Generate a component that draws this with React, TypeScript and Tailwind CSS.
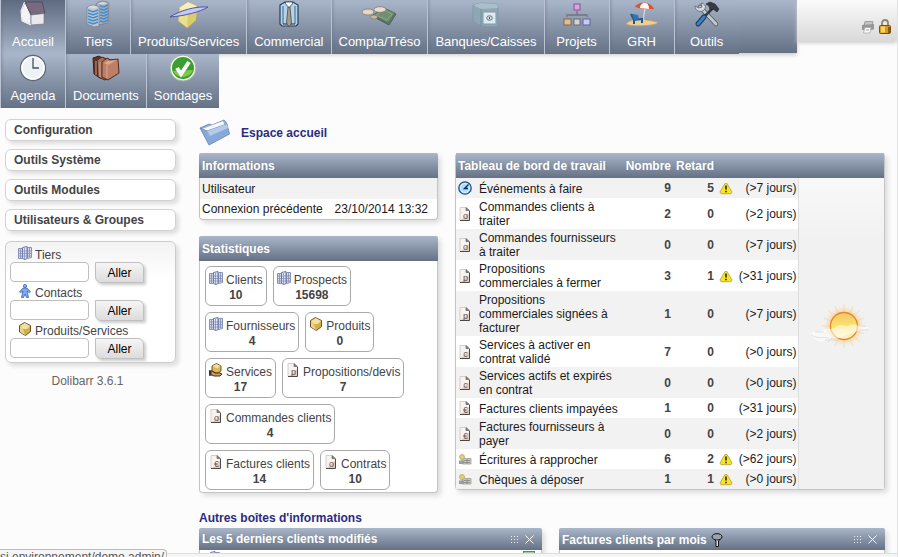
import type { ReactNode } from 'react';

const bar = 'bg-linear-to-b from-[#aab6ca] to-[#657185]';
const panel = 'rounded-sm border border-t-0 border-[#c4c4c4] bg-white shadow-[3px_3px_5px_#ddd]';
const barTitle = 'text-xs font-bold text-white [text-shadow:1px_1px_1px_#7d8899]';

/* ---------- main menu icons ---------- */

function HouseIcon() {
  return (
    <svg viewBox="0 0 26 26" className="size-[26px]" aria-hidden="true">
      <path d="M1 11 5 2l6 13v10l-9-4z" fill="#f4f4f6" stroke="#777b85" strokeWidth=".7" />
      <path d="m5 2 17 0 3 11-14 2z" fill="#796a80" stroke="#4c4658" strokeWidth=".8" />
      <path d="m11 15 13-1.500V24l-13 1z" fill="#e9e9ed" stroke="#777b85" strokeWidth=".7" />
      <path d="M4.500 2 1 11l1 10 9 4" fill="none" stroke="#fff" strokeWidth="1" />
    </svg>
  );
}

function TowersIcon() {
  return (
    <svg viewBox="0 0 26 28" className="h-7 w-[26px]" aria-hidden="true">
      <path d="M11 4c2-3 9-4 13-1l-1 20-10 2z" fill="#a9adb4" stroke="#6d747f" strokeWidth=".6" />
      <path d="M2 8c1-3 8-4 12-1v19l-5 1-7-3z" fill="#c3c6cb" stroke="#6d747f" strokeWidth=".6" />
      <path d="M3 10l5 2 5-2M3 13l5 2 5-2M3 16l5 2 5-2M3 19l5 2 5-2M3 22l5 2 5-2M15 6l4 1 4-2M15 9l4 1 4-2M15 12l4 1 4-2M15 15l4 1 4-2M15 18l4 1 4-2M15 21l4 1 4-2" fill="none" stroke="#3f8ed2" strokeWidth="1.500" />
      <path d="M3 7q5-3 10 0-5 3-10 0M13 3.500q5-3 9 0-4 2-9 0" fill="#d9dadc" />
    </svg>
  );
}

function BoxIcon() {
  return (
    <svg viewBox="0 0 40 28" className="h-7 w-10" aria-hidden="true">
      <path d="m10 8 9-6 9 4-1 14-9 8-9-7z" fill="#ecdf8d" stroke="#a79c5c" strokeWidth=".7" />
      <path d="m10 8 9 5 9-7-9-4z" fill="#f7f0bb" />
      <path d="m19 13 9-7-1 14-9 8z" fill="#dccb6c" />
      <path d="M1 17C10 11 26 6 39 7c-8 5-24 9-38 10z" fill="#c6caf0" stroke="#4c55a8" strokeWidth="1" />
    </svg>
  );
}

function ShirtIcon() {
  return (
    <svg viewBox="0 0 20 28" className="h-7 w-5" aria-hidden="true">
      <path d="m1 5 5-3h8l5 3v19l-2 2H3l-2-2z" fill="#b5d3ea" stroke="#273f59" strokeWidth="1.200" />
      <path d="M4 6v18M16 6v18" stroke="#5a80a3" strokeWidth="1.300" />
      <path d="m6 3 4 5 4-5-1-1H7z" fill="#fff" stroke="#34495e" strokeWidth=".8" />
      <path d="M9 7h2l1.500 16-2.500 4-2.500-4z" fill="#a39c92" stroke="#4f4a46" strokeWidth=".8" />
      <path d="M4 24h4M12 24h4" stroke="#1d2d3d" strokeWidth="1.200" />
    </svg>
  );
}

function MoneyIcon() {
  return (
    <svg viewBox="0 0 36 28" className="h-7 w-9" aria-hidden="true">
      <path d="m13 17 10-7 12 4-7 11z" fill="#5e7a61" stroke="#42584a" strokeWidth=".8" />
      <path d="m12 15 11-7 11 5-7 10z" fill="#718d72" stroke="#4d6955" strokeWidth=".8" />
      <path d="m15 15 8-5 8 4-5 6z" fill="none" stroke="#9db09a" strokeWidth=".6" />
      <ellipse cx="7" cy="12" rx="6" ry="3" fill="#e3d8ca" stroke="#8d7b6b" strokeWidth=".8" />
      <ellipse cx="19" cy="9.500" rx="6" ry="2.800" fill="#e9ded2" stroke="#8d7b6b" strokeWidth=".8" />
      <ellipse cx="13" cy="17" rx="3.500" ry="2" fill="#c9b8a8" stroke="#7b6857" strokeWidth=".6" />
    </svg>
  );
}

function SafeIcon() {
  return (
    <svg viewBox="0 0 28 28" className="size-7" aria-hidden="true">
      <path d="M1 5 8 3l17 1 1 4v17l-3 2-14-1-8-5z" fill="#8fa7b5" stroke="#7f95a4" strokeWidth=".8" />
      <path d="m1 5 8 4 17-1-1-4L8 3z" fill="#a9bfcb" />
      <path d="M9 9v17" stroke="#73899a" strokeWidth=".8" />
      <rect x="11" y="12" width="13" height="12" fill="#dce9f0" stroke="#8799a5" />
      <ellipse cx="17.500" cy="18" rx="2.800" ry="2.200" fill="none" stroke="#63727c" />
      <path d="M17.500 17v2" stroke="#34434e" />
    </svg>
  );
}

function ProjectIcon() {
  return (
    <svg viewBox="0 0 28 28" className="size-7" aria-hidden="true">
      <path d="M14 11v4M4 17v-2h20v2" fill="none" stroke="#73747c" strokeWidth="1.300" />
      <rect x="11" y="4" width="6" height="6" fill="#d9a5dc" stroke="#934c9a" />
      <rect x="1" y="19" width="7" height="6" fill="#d8c19c" stroke="#8d6939" />
      <rect x="11" y="19" width="6" height="6" fill="#d4d4d4" stroke="#6d6d6d" />
      <rect x="20" y="19" width="7" height="6" fill="#c8ccec" stroke="#5e65a5" />
    </svg>
  );
}

function BeachIcon() {
  return (
    <svg viewBox="0 0 34 28" className="h-7 w-[34px]" aria-hidden="true">
      <path d="M1 24c3-4 13-6 20-4 5 1 10 1 12 3-5 3-27 4-32 1z" fill="#edcf95" stroke="#c79c5d" strokeWidth=".7" />
      <path d="m20 8-2 13" stroke="#cfd5dc" strokeWidth="1.300" />
      <path d="M10 7c2-5 15-7 19 2-6 0-13 0-19-2z" fill="#e5502b" />
      <path d="M15 8c0-3 2-5 5-5s4 3 4 6z" fill="#fff" />
      <path d="m6 14 3 6 8-1v4M9 20v4M7 15h2" fill="none" stroke="#205a93" strokeWidth="2" />
      <path d="m7 14 6 1 1 4-5 1z" fill="#2f74b5" />
    </svg>
  );
}

function ToolsIcon() {
  return (
    <svg viewBox="0 0 26 28" className="h-7 w-[26px]" aria-hidden="true">
      <path d="m6 7 16 17" stroke="#50565e" strokeWidth="4.500" strokeLinecap="round" />
      <path d="m6 7 16 17" stroke="#c3c8cd" strokeWidth="3" strokeLinecap="round" />
      <path d="M1 6c0 5 6 7 9 4s1-6-3-7l1 4-3 1z" fill="#d8dcdf" stroke="#5b6269" strokeWidth=".8" />
      <path d="M19 8 10 17" stroke="#363b42" strokeWidth="2.500" />
      <path d="m10 17-6 7" stroke="#17365e" strokeWidth="5" strokeLinecap="round" />
      <path d="m10 17-6 7" stroke="#417fc1" strokeWidth="3" strokeLinecap="round" />
      <path d="m12 4 4-2 5 2 4 5-2 3-4-3-3 1-1-4z" fill="#383c42" stroke="#1e2125" strokeWidth=".6" />
    </svg>
  );
}

function ClockIcon() {
  return (
    <svg viewBox="0 0 28 28" className="size-7" aria-hidden="true">
      <circle cx="14" cy="14" r="12.500" fill="#edf2f6" stroke="#5c6672" strokeWidth="1.300" />
      <circle cx="14" cy="14" r="11" fill="none" stroke="#fff" strokeWidth="1.500" />
      <path d="M14 4v10h6" fill="none" stroke="#46515d" strokeWidth="1.300" />
    </svg>
  );
}

function FoldersIcon() {
  return (
    <svg viewBox="0 0 28 28" className="size-7" aria-hidden="true">
      <path d="m1 4 6-2 3 2 7 1v16l-9 3-6-4z" fill="#5e3629" stroke="#37211b" />
      <path d="m5 6 5-3 4 2 7 1v16l-8 4-7-3z" fill="#a76c55" stroke="#472a21" />
      <path d="m10 8 5-4 3 2 8-1 1 14-11 7-6-3z" fill="#bd8067" stroke="#4d2d23" />
      <path d="m12 9 4-2 9-1-9 5z" fill="#dda68d" />
      <path d="M4 7v14M8 8v15M15 11v13" stroke="#e0b29c" strokeWidth=".8" />
    </svg>
  );
}

function PollIcon() {
  return (
    <svg viewBox="0 0 28 28" className="size-7" aria-hidden="true">
      <circle cx="14" cy="14" r="13" fill="#f2f4ef" stroke="#a7b0a0" />
      <circle cx="14" cy="14" r="11" fill="#39a02f" />
      <path d="M4 17a11 11 0 0 0 20-1z" fill="#7fc94a" />
      <path d="m8 14 4 6 8-12" fill="none" stroke="#fff" strokeWidth="4" />
    </svg>
  );
}

/* ---------- small icons ---------- */

function CompanyIcon() {
  return (
    <svg viewBox="0 0 14 14" className="size-3.5 shrink-0" aria-hidden="true">
      <path d="M.5 2.500h4v10h-4zM9.500 1.500h4v10l-4 1z" fill="#d5d9ea" stroke="#8a92b8" />
      <path d="M4.500 1.500 9 .5v12l-2 1-2.500-1z" fill="#e2e5f1" stroke="#6d78a4" />
      <path d="M1 5h12M1 7.500h12M1 10h12M6.500 2v11M11.500 2v9M2.500 3v9" stroke="#7a86b4" strokeWidth=".7" />
    </svg>
  );
}

function PersonIcon() {
  return (
    <svg viewBox="0 0 14 14" className="size-3.5 shrink-0" aria-hidden="true">
      <circle cx="7" cy="2" r="1.600" fill="#8fb4ee" stroke="#3b64b4" strokeWidth=".8" />
      <path d="M5 4h4l3.500 4-1 .8L9 7l1.500 6.500H8.500L7 10l-1.500 3.500h-2L5 7 2.500 8.800l-1-.8z" fill="#83a9ec" stroke="#3b64b4" strokeWidth=".8" />
    </svg>
  );
}

function ProductIcon() {
  return (
    <svg viewBox="0 0 14 14" className="size-3.5 shrink-0" aria-hidden="true">
      <path d="m1.500 3.500 5-3 6 3v6l-5 4-6-3.500z" fill="#d5ae4c" stroke="#685427" />
      <path d="m2 4 5-3 5 3-3 3H5z" fill="#f3dfa0" />
      <path d="M2 4.500 5 7l2 6-5-3z" fill="#ead090" />
    </svg>
  );
}

function ServiceIcon() {
  return (
    <svg viewBox="0 0 14 14" className="size-3.5 shrink-0" aria-hidden="true">
      <path d="m3 3 4.500-2.500L12 3v5l-4 2.500L3 8z" fill="#dcb955" stroke="#6a5527" />
      <path d="m3.500 3 4-2 4 2L8 5.500z" fill="#f3dfa0" />
      <path d="M0 8h3l3 2h5l2 1-2 2H5l-2-1H0z" fill="#c9a25b" stroke="#3b2d19" />
      <path d="M0 7.500h2.500v5H0z" fill="#3a3430" />
    </svg>
  );
}

function PageIcon({ letter }: { letter: string }) {
  return (
    <svg viewBox="0 0 14 14" className="size-3.5 shrink-0" aria-hidden="true">
      <path d="M2 .5h6.500l3 3v10H2z" fill="#f8f3f0" />
      <path d="M2 .5v13M2 .5h6" stroke="#c8c4c2" strokeWidth=".8" />
      <path d="M3 13 11 6v7z" fill="#e4cfc3" />
      <path d="M11.500 4v9.500H2" fill="none" stroke="#4d4744" />
      <path d="M8 .5v3h3.500z" fill="#8a8582" stroke="#555" strokeWidth=".6" />
      <text x="7.500" y="12" textAnchor="middle" fontSize="9" fill="#5f544e">{letter}</text>
    </svg>
  );
}

function ActionIcon() {
  return (
    <svg viewBox="0 0 14 14" className="size-3.5 shrink-0" aria-hidden="true">
      <circle cx="7" cy="7" r="6.200" fill="#a9defa" stroke="#1f4c93" strokeWidth="1.300" />
      <circle cx="7" cy="7" r="4.500" fill="none" stroke="#e9f8ff" strokeWidth=".8" />
      <path d="m10.500 3.500-4 4H10" fill="none" stroke="#12294f" strokeWidth="1.400" />
    </svg>
  );
}

function AccountIcon() {
  return (
    <svg viewBox="0 0 14 14" className="size-3.5 shrink-0" aria-hidden="true">
      <path d="M4 6.500h9v5.500H4z" fill="#c9c9c6" stroke="#a0a09b" strokeWidth=".8" />
      <path d="M6 8.500h6M6 10.500h6M9 7v5" stroke="#858582" strokeWidth=".8" />
      <circle cx="4" cy="5" r="2.500" fill="#e3cf80" stroke="#b9a560" strokeWidth=".8" />
      <path d="M1 8.500h5V12H1z" fill="#999da0" />
    </svg>
  );
}

function WarningIcon() {
  return (
    <svg viewBox="0 0 14 14" className="size-3.5" role="img" aria-label="Retard">
      <path d="M6 2.500h2l5 8.500-1 1.700H2L1 11z" fill="#f6e522" stroke="#c3aa48" />
      <path d="M7 4.500v4M7 9.700v1.600" stroke="#2b2505" strokeWidth="1.600" />
    </svg>
  );
}

function FolderIcon() {
  return (
    <svg viewBox="0 0 32 28" className="h-7 w-8" aria-hidden="true">
      <path d="m1 9 9-4 3 1 12-5 2 2 1 3-16 14z" fill="#93add6" stroke="#6f86ad" strokeWidth=".8" />
      <path d="m3 10 21-8 2 5-16 12z" fill="#f4f7fb" />
      <path d="m1 9 7 3 20-7 2.500 10L10 26z" fill="#86a8da" stroke="#6681ac" strokeWidth=".8" />
      <path d="m8 12 20-7 1 4-18 8z" fill="#b4cbea" />
    </svg>
  );
}

function SunIcon() {
  return (
    <svg viewBox="0 0 64 48" className="h-12 w-16" role="img" aria-label="Météo">
      <defs>
        <radialGradient id="halo">
          <stop offset="55%" stopColor="#f9b24c" stopOpacity=".75" />
          <stop offset="100%" stopColor="#fbd795" stopOpacity="0" />
        </radialGradient>
        <linearGradient id="disc" x1="0" y1="0" x2="0" y2="1">
          <stop offset="0" stopColor="#f5c56a" />
          <stop offset=".5" stopColor="#fbe26a" />
          <stop offset="1" stopColor="#fff6d5" />
        </linearGradient>
      </defs>
      <circle cx="35" cy="24" r="20" fill="url(#halo)" />
      <path d="M35 2v44M13 24h44M19 8l32 32M51 8 19 40M26 4l18 40M44 4 26 44M15 16l40 16M55 16 15 32" stroke="#f7c477" strokeWidth=".7" opacity=".6" />
      <circle cx="35" cy="24" r="13.500" fill="url(#disc)" stroke="#e08c2e" strokeWidth="1.300" />
      <path d="M1 32c4-4 9-1 13-4s9 1 13-3 9 1 14-2 9 3 19 2c-3 4-9 2-13 5s-10 2-14 5-10-1-15 3-13 1-17-6z" fill="#fff" opacity=".55" />
      <path d="M2 33c6 4 12 2 18 3M6 30h9M50 28h9M16 38h14" stroke="#dedede" strokeWidth=".9" fill="none" />
    </svg>
  );
}

function PrinterIcon() {
  return (
    <svg viewBox="0 0 14 14" className="size-3.5" aria-hidden="true">
      <path d="M4 1.500h8l-1 4H3z" fill="#c4c4c4" stroke="#a0a0a0" />
      <path d="M1 5l12-1v5l-2 1H1z" fill="#96979a" />
      <path d="M4 7.500h6l-1 5.500H2.500z" fill="#fff" stroke="#a8a8a8" strokeWidth=".8" />
      <path d="M5 10h3" stroke="#999" />
    </svg>
  );
}

function LockIcon() {
  return (
    <svg viewBox="0 0 12 15" className="h-[15px] w-3" aria-hidden="true">
      <path d="M3 7V4a3 3 0 0 1 6 0v3" fill="none" stroke="#8b8670" strokeWidth="1.800" />
      <rect x=".5" y="6.500" width="11" height="8" rx="1" fill="#d99a1b" stroke="#7b4d0c" />
      <path d="M2 7.500h4v6H2z" fill="#f8d468" />
      <path d="M9 8h2v6H9z" fill="#8f560f" />
    </svg>
  );
}

function GripIcon() {
  return (
    <svg viewBox="0 0 9 9" className="size-[9px]" aria-hidden="true">
      <path d="M0 1.500h9M0 4.500h9M0 7.500h9" stroke="#f2f4f7" strokeWidth="1" strokeDasharray="1 2" />
    </svg>
  );
}

function CloseIcon() {
  return (
    <svg viewBox="0 0 9 9" className="size-[9px]" aria-hidden="true">
      <path d="m.5.5 8 8M8.500.5l-8 8" stroke="#fff" strokeWidth="1" />
    </svg>
  );
}

function FilterIcon() {
  return (
    <svg viewBox="0 0 12 14" className="h-3.5 w-3" aria-hidden="true">
      <path d="M1 4 5 8v5.500h2.500V8L11 4z" fill="#dfe3e8" stroke="#111" />
      <ellipse cx="6" cy="3.800" rx="5" ry="3.200" fill="#9aa2ac" stroke="#111" />
    </svg>
  );
}

/* ---------- data ---------- */

type MenuEntry = { label: string; icon: ReactNode; active?: boolean };

const menu: MenuEntry[] = [
  { label: 'Accueil', icon: <HouseIcon />, active: true },
  { label: 'Tiers', icon: <TowersIcon /> },
  { label: 'Produits/Services', icon: <BoxIcon /> },
  { label: 'Commercial', icon: <ShirtIcon /> },
  { label: 'Compta/Tréso', icon: <MoneyIcon /> },
  { label: 'Banques/Caisses', icon: <SafeIcon /> },
  { label: 'Projets', icon: <ProjectIcon /> },
  { label: 'GRH', icon: <BeachIcon /> },
  { label: 'Outils', icon: <ToolsIcon /> },
  { label: 'Agenda', icon: <ClockIcon /> },
  { label: 'Documents', icon: <FoldersIcon /> },
  { label: 'Sondages', icon: <PollIcon /> },
];

const sideLinks = ['Configuration', 'Outils Système', 'Outils Modules', 'Utilisateurs & Groupes'];

const searches = [
  { id: 'tiers', label: 'Tiers', icon: <CompanyIcon /> },
  { id: 'contacts', label: 'Contacts', icon: <PersonIcon /> },
  { id: 'produits', label: 'Produits/Services', icon: <ProductIcon /> },
];

const stats = [
  { label: 'Clients', value: 10, icon: <CompanyIcon /> },
  { label: 'Prospects', value: 15698, icon: <CompanyIcon /> },
  { label: 'Fournisseurs', value: 4, icon: <CompanyIcon /> },
  { label: 'Produits', value: 0, icon: <ProductIcon /> },
  { label: 'Services', value: 17, icon: <ServiceIcon /> },
  { label: 'Propositions/devis', value: 7, icon: <PageIcon letter="p" /> },
  { label: 'Commandes clients', value: 4, icon: <PageIcon letter="o" /> },
  { label: 'Factures clients', value: 14, icon: <PageIcon letter="€" /> },
  { label: 'Contrats', value: 10, icon: <PageIcon letter="o" /> },
];

const tasks = [
  { label: 'Événements à faire', count: 9, late: 5, days: 7, icon: <ActionIcon /> },
  { label: 'Commandes clients à traiter', count: 2, late: 0, days: 2, icon: <PageIcon letter="o" /> },
  { label: 'Commandes fournisseurs à traiter', count: 0, late: 0, days: 7, icon: <PageIcon letter="o" /> },
  { label: 'Propositions commerciales à fermer', count: 3, late: 1, days: 31, icon: <PageIcon letter="p" /> },
  { label: 'Propositions commerciales signées à facturer', count: 1, late: 0, days: 7, icon: <PageIcon letter="p" /> },
  { label: 'Services à activer en contrat validé', count: 7, late: 0, days: 0, icon: <PageIcon letter="c" /> },
  { label: 'Services actifs et expirés en contrat', count: 0, late: 0, days: 0, icon: <PageIcon letter="c" /> },
  { label: 'Factures clients impayées', count: 1, late: 0, days: 31, icon: <PageIcon letter="€" /> },
  { label: 'Factures fournisseurs à payer', count: 0, late: 0, days: 2, icon: <PageIcon letter="€" /> },
  { label: 'Écritures à rapprocher', count: 6, late: 2, days: 62, icon: <AccountIcon /> },
  { label: 'Chèques à déposer', count: 1, late: 1, days: 0, icon: <AccountIcon /> },
];

/* ---------- page parts ---------- */

function TopMenu() {
  return (
    <header className="flex h-[107px] shrink-0 items-start">
      <nav className={`h-[53px] w-[calc(100%-100px)] shadow-[0_2px_4px_#ccc] ${bar}`}>
        <ul className="flex flex-wrap">
          {menu.map((m) => (
            <li key={m.label}>
              <a
                href="#"
                className={`flex h-[54px] min-w-[65px] flex-col items-center justify-between border-l border-l-[#b9c3d3] px-[7px] pb-0.5 text-[13px] leading-5 text-white shadow-[inset_3px_0_3px_-2px_#66728688] ${
                  m.active ? 'bg-linear-to-b from-[#5f6b80] to-[#aab6ca]' : bar
                }`}
              >
                {m.icon}
                {m.label}
              </a>
            </li>
          ))}
        </ul>
      </nav>
      <div className="flex h-[41px] flex-1 items-center justify-end gap-1 bg-linear-to-b from-[#fbfbfb] to-[#d9d9d9] pt-3 pr-1.5 shadow-[0_2px_4px_#ccc]">
        <button type="button" aria-label="Imprimer"><PrinterIcon /></button>
        <button type="button" aria-label="Déconnexion"><LockIcon /></button>
      </div>
    </header>
  );
}

function SideBar() {
  return (
    <aside className="w-[171px] shrink-0 pt-3 text-xs text-[#444]">
      <ul className="flex flex-col gap-2">
        {sideLinks.map((l) => (
          <li key={l}>
            <a href="#" className="block h-[22px] rounded-md border border-[#d2d2d2] bg-white pl-2 leading-5 font-bold shadow-[3px_3px_4px_#ddd]">
              {l}
            </a>
          </li>
        ))}
      </ul>
      <div className="mt-2.5 rounded-md border border-[#ccc] bg-linear-to-b from-[#f3f3f3] to-white to-30% px-1 pt-0.5 pb-1 shadow-[3px_3px_4px_#ddd]">
        {searches.map((s) => (
          <form key={s.id} onSubmit={(e) => e.preventDefault()}>
            <label htmlFor={s.id} className="flex h-[18px] items-center gap-[3px] pl-2 leading-[18px]">
              {s.icon}
              <span className="pt-1">{s.label}</span>
            </label>
            <div className="flex h-5 items-start gap-1.5">
              <input id={s.id} type="text" className="h-5 w-[79px] rounded-[4px] border border-[#bfbfbf] bg-white px-1" />
              <button type="submit" className="h-[21px] w-[49px] rounded-tr-md rounded-bl-md border border-[#c0c0c0] bg-linear-to-b from-[#f5f5f5] to-[#dcdcdc] leading-[18px] text-black shadow-[2px_2px_3px_#ccc]">
                Aller
              </button>
            </div>
          </form>
        ))}
      </div>
      <p className="pt-2.5 pr-1.5 text-center leading-4 text-[#666]">Dolibarr 3.6.1</p>
    </aside>
  );
}

function InfoPanel() {
  return (
    <section className={panel}>
      <h2 className={`-mx-px h-[25px] rounded-t-xs pl-[3px] leading-[26px] ${bar} ${barTitle}`}>Informations</h2>
      <table className="w-full text-left text-xs text-[#1a1a1a]">
        <tbody>
          <tr className="h-[21px] bg-[#f2f2f2]">
            <th scope="row" className="pl-0.5 font-normal">Utilisateur</th>
            <td />
          </tr>
          <tr className="h-5">
            <th scope="row" className="pl-0.5 font-normal">Connexion précédente</th>
            <td>23/10/2014 13:32</td>
          </tr>
        </tbody>
      </table>
    </section>
  );
}

function StatsPanel() {
  return (
    <section className={panel}>
      <h2 className={`-mx-px h-[25px] rounded-t-xs pl-[3px] leading-[26px] ${bar} ${barTitle}`}>Statistiques</h2>
      <ul className="flex flex-wrap gap-1.5 px-[5px] pt-[5px] pb-0.5">
        {stats.map((s) => (
          <li key={s.label}>
            <a href="#" className="block h-10 rounded-md border border-[#a9a9a9] bg-white px-[3px] pt-1 text-center text-xs text-[#444]">
              <span className="flex h-[17px] items-start gap-[3px]">
                {s.icon}
                <span className="pt-px leading-4">{s.label}</span>
              </span>
              <span className="block leading-[14px] font-bold">{s.value}</span>
            </a>
          </li>
        ))}
      </ul>
    </section>
  );
}

function TaskPanel() {
  return (
    <section className={`self-start ${panel}`}>
      <table className="w-full table-fixed text-xs leading-[14px] text-[#1a1a1a]">
        <colgroup>
          <col className="w-[22px]" />
          <col className="w-[146px]" />
          <col className="w-[49px]" />
          <col className="w-[43px]" />
          <col className="w-[19px]" />
          <col className="w-[63px]" />
          <col />
        </colgroup>
        <thead>
          <tr className={`h-[25px] ${bar} ${barTitle}`}>
            <th colSpan={2} className="pl-0.5 text-left">Tableau de bord de travail</th>
            <th className="pr-0.5 text-right">Nombre</th>
            <th className="pr-0.5 text-right">Retard</th>
            <th colSpan={3} />
          </tr>
        </thead>
        <tbody>
          {tasks.map((t, i) => (
            <tr key={t.label} className="h-5 odd:bg-[#f2f2f2]">
              <td className="pl-0.5">{t.icon}</td>
              <td className="pt-0.5 pr-1 pb-px pl-px">{t.label}</td>
              <td className="pr-0.5 text-right font-bold text-[#444]">{t.count}</td>
              <td className="pr-0.5 text-right font-bold text-[#444]">{t.late}</td>
              <td className="pl-[3px]">{t.late > 0 && <WarningIcon />}</td>
              <td className="pr-px text-right whitespace-nowrap">(&gt;{t.days} jours)</td>
              {i === 0 && (
                <td rowSpan={tasks.length} className="border-l border-[#ddd] bg-linear-to-b from-[#f8f8f8] to-[#f1f1f1] to-20%">
                  <div className="flex justify-center pb-4">
                    <SunIcon />
                  </div>
                </td>
              )}
            </tr>
          ))}
        </tbody>
      </table>
    </section>
  );
}

function BoxPanel({ title, filter, children }: { title: string; filter?: boolean; children?: ReactNode }) {
  return (
    <section className={`h-20 ${panel}`}>
      <div className={`-mx-px flex h-[22px] items-center gap-[5px] rounded-t-xs pr-2 pl-[3px] ${bar}`}>
        <h3 className={`flex flex-1 items-center gap-1 ${filter ? 'pt-0.5' : ''} ${barTitle}`}>
          {title}
          {filter && <FilterIcon />}
        </h3>
        <button type="button" aria-label="Déplacer"><GripIcon /></button>
        <button type="button" aria-label="Fermer"><CloseIcon /></button>
      </div>
      {children}
    </section>
  );
}

export default function App() {
  return (
    <div className="relative flex h-screen flex-col overflow-hidden border-r border-[#e2e2e2] bg-[#fcfcfc] font-['Liberation_Sans',Arial,sans-serif]">
      <TopMenu />
      <div className="flex gap-[23px] pr-3 pl-[5px]">
        <SideBar />
        <main className="flex-1 pt-3">
          <h1 className="flex h-[34px] items-start gap-2.5 text-xs font-bold text-[#2b2b80]">
            <FolderIcon />
            <span className="leading-7">Espace accueil</span>
          </h1>
          <div className="grid grid-cols-[239fr_430fr] gap-[17px]">
            <div className="flex flex-col gap-4">
              <InfoPanel />
              <StatsPanel />
            </div>
            <TaskPanel />
          </div>
          <h2 className="pt-[17px] pb-0.5 text-xs font-bold text-[#2b2b80]">Autres boîtes d'informations</h2>
          <div className="grid grid-cols-[343fr_326fr] gap-[17px]">
            <BoxPanel title="Les 5 derniers clients modifiés">
              <div className="flex justify-between px-1.5 pt-px">
                <CompanyIcon />
                <span className="h-3 w-3 border border-[#4c9255] bg-[#9fce9f]" />
              </div>
            </BoxPanel>
            <BoxPanel title="Factures clients par mois" filter />
          </div>
        </main>
      </div>
      <div className="absolute inset-x-0 bottom-0 h-1 border-t border-[#ddd] bg-[#f5f5f5]" />
      <div className="absolute bottom-0 left-0 h-2 w-[167px] overflow-hidden rounded-tr-sm border-t border-r border-[#bbb] bg-[#f5f5f5] text-xs leading-[14px] whitespace-nowrap text-[#555]">
        si.environnement/demo.admin/
      </div>
    </div>
  );
}
